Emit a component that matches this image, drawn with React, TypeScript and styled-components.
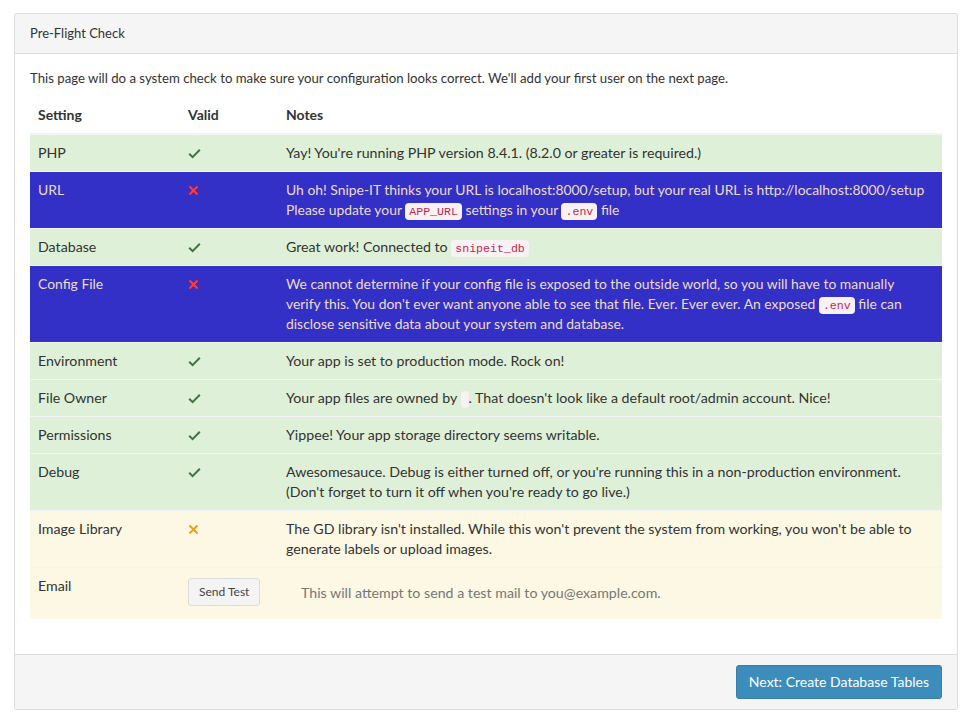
import React from "react";
import styled, { createGlobalStyle } from "styled-components";

const Global = createGlobalStyle`
  html, body { margin: 0; padding: 0; background: #ffffff; }
  body { font-family: "Lato", "Noto Sans", sans-serif; font-size: 14.2px; line-height: 20px; color: #333; }
`;

const Page = styled.div`
  padding: 13px 13px 14px 14px;
`;

const Panel = styled.div`
  border: 1px solid #ddd;
  border-radius: 2px;
  background: #fff;
`;

const PanelHeading = styled.div`
  background: #f5f5f5;
  border-bottom: 1px solid #ddd;
  padding: 9px 15px 10px;
  font-size: 13px;
  color: #333;
`;

const PanelBody = styled.div`
  padding: 14px 15px 15px;
`;

const Intro = styled.p`
  margin: 0 0 9px;
  font-size: 13.2px;
`;

const Table = styled.table`
  width: 100%;
  border-collapse: collapse;
  table-layout: fixed;
  margin-bottom: 20px;
`;

const Col = styled.col<{ $w?: number }>`
  width: ${(p) => (p.$w ? `${p.$w}px` : "auto")};
`;

const Th = styled.th`
  text-align: left;
  padding: 8px;
  font-weight: 700;
  font-size: 14px;
  line-height: 20px;
  border-bottom: 2px solid #f4f4f4;
`;

type Tone = "success" | "danger" | "warning";

const toneBg: Record<Tone, string> = {
  success: "#dff0d8",
  danger: "#3330c8",
  warning: "#fcf8e3",
};

const Tr = styled.tr<{ $tone: Tone }>`
  background: ${(p) => toneBg[p.$tone]};
  color: ${(p) => (p.$tone === "danger" ? "#eedcc4" : "#333")};
  font-size: ${(p) => (p.$tone === "danger" ? "13.9px" : "14.2px")};
  border-top: 1px solid #f4f4f4;
`;

const Td = styled.td`
  padding: 8px;
  vertical-align: top;
  line-height: 20px;
`;

const NoteText = styled.div<{ $max?: number }>`
  max-width: ${(p) => (p.$max ? `${p.$max}px` : "none")};
`;

const Code = styled.code`
  font-family: "Liberation Mono", monospace;
  font-size: 11.6px;
  line-height: 1;
  padding: 2px 4px;
  color: #c7254e;
  background: #f9f2f4;
  border-radius: 4px;
`;

const SmallBtn = styled.button`
  font-family: "Lato", "Noto Sans", sans-serif;
  font-size: 12px;
  line-height: 18px;
  padding: 4px 10px;
  color: #444;
  background: #f4f4f4;
  border: 1px solid #ddd;
  border-radius: 3px;
  margin: 2px 0 5px;
  display: block;
`;

const MutedNote = styled.span`
  display: block;
  padding: 7px 15px 0;
  color: #777;
`;

const PanelFooter = styled.div`
  background: #f5f5f5;
  border-top: 1px solid #ddd;
  padding: 10px 15px;
  display: flex;
  justify-content: flex-end;
`;

const PrimaryBtn = styled.button`
  font-family: "Lato", "Noto Sans", sans-serif;
  font-size: 14px;
  line-height: 20px;
  padding: 6px 12px;
  color: #fff;
  background: #3c8dbc;
  border: 1px solid #367fa9;
  border-radius: 3px;
`;

const IconCell = styled.span`
  display: flex;
  align-items: center;
  height: 20px;
`;

const Check = () => (
  <svg width="13" height="11" viewBox="0 0 13 11" aria-hidden>
    <path d="M1.2 5.8 L4.6 9.2 L11.8 1.8" fill="none" stroke="#3c763d" strokeWidth="2" />
  </svg>
);

const Cross = ({ color }: { color: string }) => (
  <svg width="11" height="11" viewBox="0 0 11 11" aria-hidden>
    <path d="M1.5 1.5 L9.5 9.5 M9.5 1.5 L1.5 9.5" fill="none" stroke={color} strokeWidth="2" />
  </svg>
);

export default function App() {
  return (
    <Page>
      <Global />
      <Panel>
        <PanelHeading>Pre-Flight Check</PanelHeading>
        <PanelBody>
          <Intro>
            This page will do a system check to make sure your configuration looks correct. We'll add your first user on the next page.
          </Intro>
          <Table>
            <colgroup>
              <Col $w={150} />
              <Col $w={98} />
              <Col />
            </colgroup>
            <thead>
              <tr>
                <Th>Setting</Th>
                <Th>Valid</Th>
                <Th>Notes</Th>
              </tr>
            </thead>
            <tbody>
              <Tr $tone="success">
                <Td>PHP</Td>
                <Td><IconCell><Check /></IconCell></Td>
                <Td>Yay! You're running PHP version 8.4.1. (8.2.0 or greater is required.)</Td>
              </Tr>
              <Tr $tone="danger">
                <Td>URL</Td>
                <Td><IconCell><Cross color="#ff3b3b" /></IconCell></Td>
                <Td>
                  Uh oh! Snipe-IT thinks your URL is localhost:8000/setup, but your real URL is http://localhost:8000/setup
                  <br />
                  Please update your <Code>APP_URL</Code> settings in your <Code>.env</Code> file
                </Td>
              </Tr>
              <Tr $tone="success">
                <Td>Database</Td>
                <Td><IconCell><Check /></IconCell></Td>
                <Td>Great work! Connected to <Code>snipeit_db</Code></Td>
              </Tr>
              <Tr $tone="danger">
                <Td>Config File</Td>
                <Td><IconCell><Cross color="#ff3b3b" /></IconCell></Td>
                <Td>
                  <NoteText $max={622}>
                    We cannot determine if your config file is exposed to the outside world, so you will have to manually verify this. You don't ever want anyone able to see that file. Ever. Ever ever. An exposed <Code>.env</Code> file can disclose sensitive data about your system and database.
                  </NoteText>
                </Td>
              </Tr>
              <Tr $tone="success">
                <Td>Environment</Td>
                <Td><IconCell><Check /></IconCell></Td>
                <Td>Your app is set to production mode. Rock on!</Td>
              </Tr>
              <Tr $tone="success">
                <Td>File Owner</Td>
                <Td><IconCell><Check /></IconCell></Td>
                <Td>Your app files are owned by <Code></Code>. That doesn't look like a default root/admin account. Nice!</Td>
              </Tr>
              <Tr $tone="success">
                <Td>Permissions</Td>
                <Td><IconCell><Check /></IconCell></Td>
                <Td>Yippee! Your app storage directory seems writable.</Td>
              </Tr>
              <Tr $tone="success">
                <Td>Debug</Td>
                <Td><IconCell><Check /></IconCell></Td>
                <Td>
                  Awesomesauce. Debug is either turned off, or you're running this in a non-production environment.
                  <br />
                  (Don't forget to turn it off when you're ready to go live.)
                </Td>
              </Tr>
              <Tr $tone="warning">
                <Td>Image Library</Td>
                <Td><IconCell><Cross color="#f39c12" /></IconCell></Td>
                <Td>
                  The GD library isn't installed. While this won't prevent the system from working, you won't be able to generate labels or upload images.
                </Td>
              </Tr>
              <Tr $tone="warning">
                <Td>Email</Td>
                <Td><SmallBtn>Send Test</SmallBtn></Td>
                <Td>
                  <MutedNote>This will attempt to send a test mail to you@example.com.</MutedNote>
                </Td>
              </Tr>
            </tbody>
          </Table>
        </PanelBody>
        <PanelFooter>
          <PrimaryBtn>Next: Create Database Tables</PrimaryBtn>
        </PanelFooter>
      </Panel>
    </Page>
  );
}
